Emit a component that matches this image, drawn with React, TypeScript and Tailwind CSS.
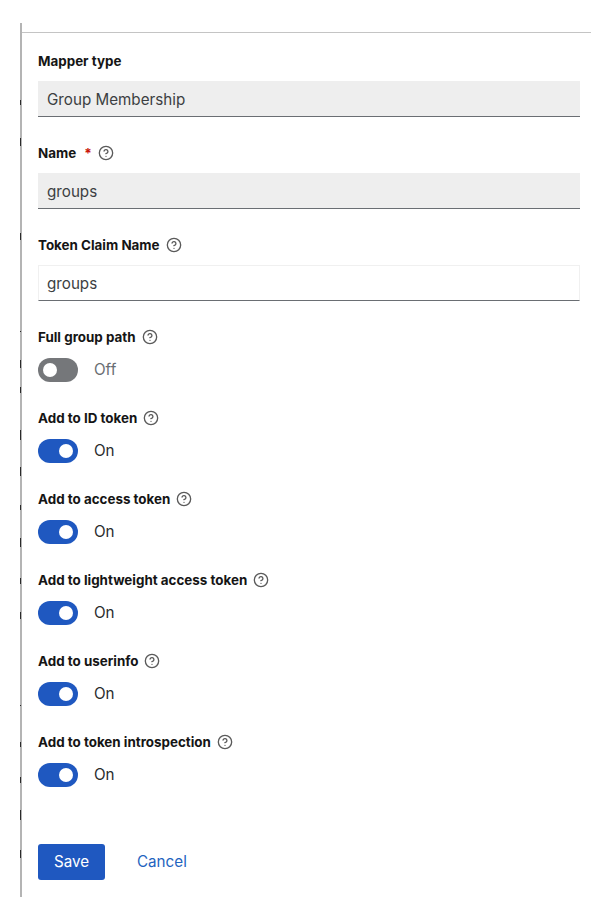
import { CircleHelp } from "lucide-react";

const toggles = [
  { label: "Full group path", on: false },
  { label: "Add to ID token", on: true },
  { label: "Add to access token", on: true },
  { label: "Add to lightweight access token", on: true },
  { label: "Add to userinfo", on: true },
  { label: "Add to token introspection", on: true },
];

// clipped text from the page behind, showing along the divider
const specks = [
  [100, 5], [138, 8], [233, 7], [331, 1], [360, 8], [387, 6], [430, 10], [467, 9], [505, 5], [538, 9],
  [578, 6], [612, 7], [705, 1], [742, 5], [777, 6], [810, 10], [850, 8],
];

function FieldLabel({ text, required, help }: { text: string; required?: boolean; help?: boolean }) {
  return (
    <div className="flex h-5 items-center text-[13.4px] font-bold text-[#151515]">
      <span>{text}</span>
      {required ? <span className="ml-[8px] text-[#c9190b]">*</span> : null}
      {help ? <CircleHelp className="ml-[6px] h-4 w-4 text-[#5a5a5a]" strokeWidth={2} aria-hidden /> : null}
    </div>
  );
}

function TextField({ label, value, readOnly, required, help }: { label: string; value: string; readOnly?: boolean; required?: boolean; help?: boolean }) {
  return (
    <div>
      <FieldLabel text={label} required={required} help={help} />
      <div
        className={`mt-[10px] flex h-9 items-center border-b border-[#6a6e73] pt-[3px] text-[15.2px] text-[#3c3f42] ${
          readOnly ? "bg-[#eeeeee] pl-[9px]" : "border-x border-t border-x-[#f0f0f0] border-t-[#f0f0f0] bg-white pl-[8px]"
        }`}
      >
        {value}
      </div>
    </div>
  );
}

function Toggle({ label, on }: { label: string; on: boolean }) {
  return (
    <div>
      <FieldLabel text={label} help />
      <div className="mt-[11px] flex items-center">
        <span
          className={`flex h-6 w-10 items-center rounded-full px-[5px] ${
            on ? "justify-end bg-[#1f58c0]" : "justify-start bg-[#75777a]"
          }`}
        >
          <span className="h-[14px] w-[14px] rounded-full bg-white" />
        </span>
        <span className={`ml-[16px] text-[15.2px] ${on ? "text-[#2a2c2e]" : "text-[#6a6e73]"}`}>{on ? "On" : "Off"}</span>
      </div>
    </div>
  );
}

export default function App() {
  return (
    <div className="relative h-[906px] w-[594px] overflow-hidden bg-white pt-[23px] pl-[20px] font-['Inter',sans-serif]">
      {specks.map(([top, height]) => (
        <span key={top} className="absolute left-[20px] w-px bg-[#2a2a2a]" style={{ top, height }} />
      ))}
      <div className="h-[874px] w-[571px] border-l-2 border-[#b4b4b4] pt-[9px]">
        <div className="border-t border-[#c4c4c4]" />
        <div className="ml-[16px] flex w-[542px] flex-col gap-[26px] pt-[18px]">
          <TextField label="Mapper type" value="Group Membership" readOnly />
          <TextField label="Name" value="groups" readOnly required help />
          <TextField label="Token Claim Name" value="groups" help />
          {toggles.map((t) => (
            <Toggle key={t.label} label={t.label} on={t.on} />
          ))}
          <div className="mt-[31px] flex items-center">
            <button type="button" className="h-9 w-[67px] rounded-[3px] bg-[#1f58c0] text-[15.2px] text-white">
              Save
            </button>
            <button type="button" className="ml-[32px] text-[15.2px] text-[#1f64c0]">
              Cancel
            </button>
          </div>
        </div>
      </div>
    </div>
  );
}
